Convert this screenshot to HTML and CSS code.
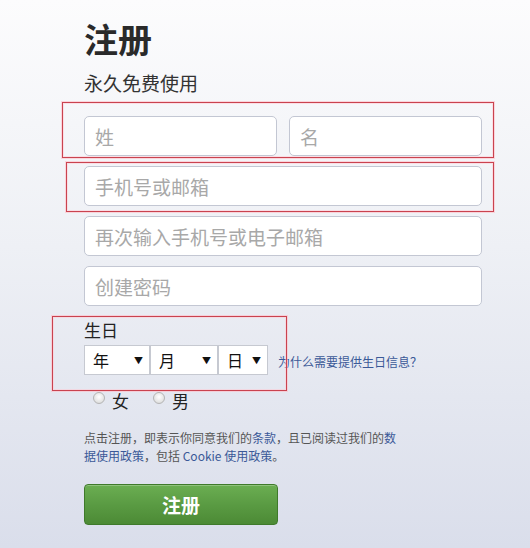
FILE: index.html
```html
<!DOCTYPE html>
<html lang="zh-CN">
<head>
  <meta charset="UTF-8">
  <meta name="viewport" content="width=device-width, initial-scale=1.0">
  <title>注册</title>
  <link rel="stylesheet" href="styles.css">
</head>
<body>
  <div class="page">
    <h1 class="title">注册</h1>
    <p class="subtitle">永久免费使用</p>

    <div class="fields">
      <div class="row">
        <input class="field" type="text" placeholder="姓">
        <input class="field" type="text" placeholder="名">
      </div>
      <input class="field" type="text" placeholder="手机号或邮箱">
      <input class="field" type="text" placeholder="再次输入手机号或电子邮箱">
      <input class="field" type="password" placeholder="创建密码">
    </div>

    <div class="birthday">
      <div class="label">生日</div>
      <div class="date-row">
        <div class="select sel-year"><span>年</span><span class="arrow">▼</span></div>
        <div class="select sel-month"><span>月</span><span class="arrow">▼</span></div>
        <div class="select sel-day"><span>日</span><span class="arrow">▼</span></div>
        <a class="why" href="#">为什么需要提供生日信息？</a>
      </div>
    </div>

    <div class="gender">
      <label class="option"><span class="radio"></span>女</label>
      <label class="option"><span class="radio"></span>男</label>
    </div>

    <p class="terms">点击注册，即表示你同意我们的<a href="#">条款</a>，且已阅读过我们的<a href="#">数据使用政策</a>，包括 <a href="#">Cookie 使用政策</a>。</p>

    <button class="submit">注册</button>
  </div>

  <!-- annotation boxes -->
  <div class="mark mark-name"></div>
  <div class="mark mark-phone"></div>
  <div class="mark mark-birth"></div>
</body>
</html>
```

FILE: styles.css
```css
html, body {
  margin: 0;
  height: 100%;
}
body {
  font-family: "Noto Sans CJK SC", "Liberation Sans", sans-serif;
  color: #333;
  background: linear-gradient(to bottom, #fcfcfd 0%, #eef0f5 45%, #dadeeb 100%);
  position: relative;
  overflow: hidden;
}
.page {
  padding-left: 84px;
  width: 398px;
}
.title {
  margin: 0;
  padding-top: 22px;
  font-size: 34px;
  line-height: 1;
  font-weight: bold;
  color: #2a2a2a;
}
.subtitle {
  margin: 17px 0 0;
  font-size: 19px;
  line-height: 1;
  color: #333;
}
.fields {
  margin-top: 24px;
  display: flex;
  flex-direction: column;
  gap: 10px;
}
.row {
  display: flex;
  gap: 12px;
}
.field {
  box-sizing: border-box;
  width: 100%;
  height: 40px;
  padding: 0 10px;
  border: 1px solid #c3c7d3;
  border-radius: 5px;
  background: #fff;
  font-family: inherit;
  font-size: 19px;
  color: #333;
}
.field::placeholder {
  color: #a8a8a8;
}
.birthday {
  margin-top: 15px;
}
.label {
  font-size: 17px;
  line-height: 1;
  color: #222;
}
.date-row {
  margin-top: 7px;
  display: flex;
  align-items: center;
}
.select {
  box-sizing: border-box;
  height: 30px;
  display: flex;
  align-items: center;
  justify-content: space-between;
  padding: 0 6px 0 8px;
  background: #fff;
  border: 1px solid #c6c9d1;
  font-size: 16px;
  color: #111;
}
.sel-year { width: 66px; }
.sel-month { width: 68px; }
.sel-day { width: 50px; }
.select .arrow {
  font-size: 9px;
  color: #111;
}
.why {
  margin-left: 10px;
  margin-top: 2px;
  font-size: 12px;
  color: #3b5998;
  text-decoration: none;
}
.gender {
  margin-top: 16px;
  margin-left: 9px;
  display: flex;
  gap: 24px;
}
.option {
  display: flex;
  align-items: center;
  gap: 7px;
  font-size: 17px;
  line-height: 20px;
  color: #222;
}
.radio {
  box-sizing: border-box;
  width: 12px;
  height: 12px;
  border-radius: 50%;
  border: 1px solid #b5b5b5;
  background: radial-gradient(circle at 50% 40%, #fff 0%, #e6e6e6 60%, #d0d0d0 100%);
  margin-top: -6px;
}
.terms {
  margin: 18px 0 0;
  width: 318px;
  font-size: 12px;
  line-height: 18px;
  color: #555;
}
.terms a {
  color: #3b5998;
  text-decoration: none;
}
.submit {
  display: block;
  margin-top: 19px;
  width: 194px;
  height: 41px;
  border: 1px solid #3f7a2b;
  border-radius: 4px;
  background: linear-gradient(to bottom, #6bae52 0%, #5a9b43 50%, #4c8a35 100%);
  box-shadow: inset 0 1px 0 rgba(255,255,255,0.25);
  color: #fff;
  font-family: inherit;
  font-size: 19px;
  font-weight: bold;
  cursor: pointer;
}
.mark {
  position: absolute;
  border: 1px solid #c9434f;
  box-shadow: 0 0 0 1px rgba(255, 190, 200, 0.6), inset 0 0 0 1px rgba(255, 200, 210, 0.5);
}
.mark-name {
  left: 62px;
  top: 102px;
  width: 430px;
  height: 54px;
}
.mark-phone {
  left: 66px;
  top: 162px;
  width: 426px;
  height: 48px;
}
.mark-birth {
  left: 52px;
  top: 316px;
  width: 233px;
  height: 73px;
}
```
